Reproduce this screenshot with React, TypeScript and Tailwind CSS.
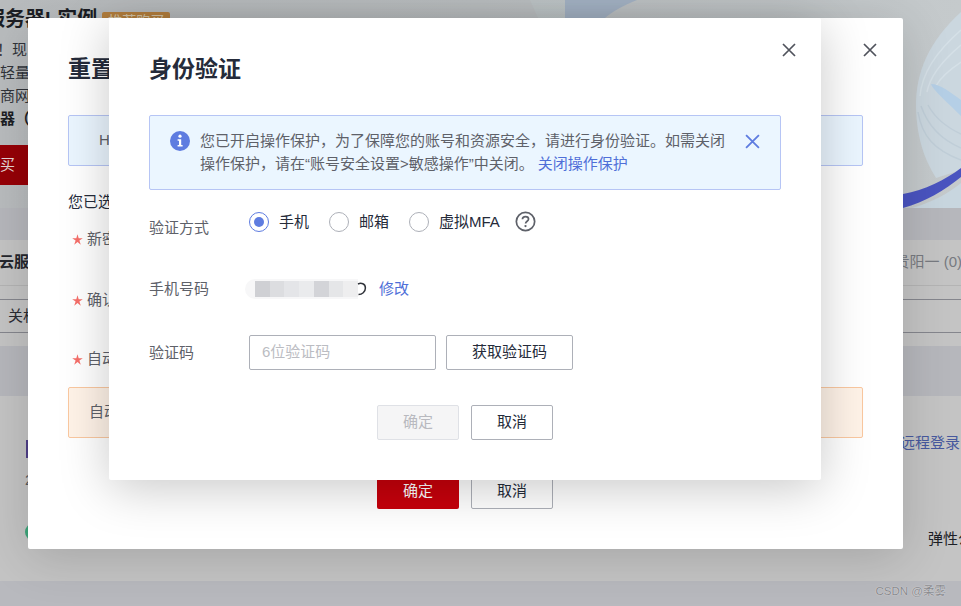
const FONT = "font-['Liberation_Sans','Noto_Sans_CJK_SC',sans-serif]";

function CloseIcon({ color = "#50535c", size = 14 }: { color?: string; size?: number }) {
  return (
    <svg width={size} height={size} viewBox="0 0 14 14" fill="none">
      <path d="M1 1L13 13M13 1L1 13" stroke={color} strokeWidth="1.7" />
    </svg>
  );
}

function Star() {
  return (
    <svg width="11" height="11" viewBox="0 0 11 11" className="shrink-0">
      <path d="M5.5 0.2L6.7 4.2H10.8L7.4 6.6L8.8 10.8L5.5 8.1L2.2 10.8L3.6 6.6L0.2 4.2H4.3Z" fill="#f66f6a" />
    </svg>
  );
}

function Radio({ checked, label }: { checked?: boolean; label: string }) {
  return (
    <div className="flex items-center gap-[10px]">
      <span
        className={
          checked
            ? "flex h-5 w-5 items-center justify-center rounded-full border border-[#5e7ce0] bg-white"
            : "flex h-5 w-5 items-center justify-center rounded-full border border-[#adb0b8] bg-white"
        }
      >
        {checked && <span className="h-[10px] w-[10px] rounded-full bg-[#5e7ce0]" />}
      </span>
      <span className="text-[15px] leading-5 text-[#252b3a]">{label}</span>
    </div>
  );
}

function Background() {
  return (
    <div className="flex h-[606px] w-[961px] flex-col bg-[#c4c4c4] text-[15px]">
      <div className="h-[208px] overflow-hidden bg-gradient-to-r from-[#b9bcbe] via-[#bcc0c2] to-[#c5cacc] pt-[6px]">
        <div className="ml-[-35px] flex items-center gap-[5px]">
          <span className="text-xl font-bold leading-[26px] text-[#1c1e24]">云服务器L实例</span>
          <span className="mt-[4px] rounded-[2px] bg-[#b8823f] px-[6px] text-sm leading-[18px] text-[#d8c8a8]">推荐购买</span>
        </div>
        <div className="ml-[-3px] mt-[6px] flex flex-col leading-[23px] text-[#30333a]">
          <span>！现</span>
          <span className="ml-[3px]">轻量</span>
          <span className="ml-[3px]">商网</span>
          <span className="ml-[3px] font-bold text-[#1c1e24]">器（</span>
        </div>
        <div className="mt-[15px] flex h-10 w-7 items-center bg-[#960007] text-[#e5d5d5]">买</div>
      </div>
      <div className="h-[32px] bg-[#b6b7bc]" />
      <div className="flex h-[46px] items-center justify-between border-b border-[#b4b4b4] bg-[#c4c4c4]">
        <span className="ml-[-1px] font-bold text-[#24262c]">云服务</span>
        <span className="mr-[-1px] text-[#777a80]">贵阳一 (0)</span>
      </div>
      <div className="mt-[13px] flex h-[34px] items-center border-y border-[#85868d] pl-[8px] text-[#2a2c33]">关机</div>
      <div className="h-[13px]" />
      <div className="h-[50px] bg-[#b6b7bc]" />
      <div className="flex h-[185px] justify-between bg-[#c4c4c4]">
        <div className="flex flex-col items-start pl-[26px] pt-[44px]">
          <span className="h-[18px] w-[2px] bg-[#4f3f88]" />
          <span className="ml-[-1px] mt-[11px] text-[#55575c]">2</span>
          <span className="ml-[-1px] mt-[31px] h-[18px] w-[18px] rounded-full bg-[#3da57a]" />
        </div>
        <div className="flex flex-col items-end pt-[36px]">
          <span className="mr-[1px] text-[#47599e]">远程登录</span>
          <span className="mr-[-27px] mt-[73px] text-[#1d1f26]">弹性公网</span>
        </div>
      </div>
      <div className="flex h-[25px] items-start justify-end bg-[#b8b9be] pr-[15px] pt-px text-[11.5px] leading-[18px] text-[#8a8b8f] [text-shadow:0_0_1px_#f5f5f5]">
        CSDN @柔雾
      </div>
    </div>
  );
}

function Art() {
  return (
    <svg className="absolute left-0 top-0" width="961" height="208" viewBox="0 0 961 208" fill="none">
      <path d="M530 0H565V18H538Z" fill="#c2cccd" opacity="0.5" />
      <path d="M565 0H637C622 6 612 12 605 18H565Z" fill="#a5b4c6" />
      <path d="M961 12C930 40 915 72 916 108C917 140 925 160 936 178L961 170Z" fill="#cbd7df" />
      <path d="M961 30C938 50 922 72 920 96M961 45C943 60 930 76 927 92M961 62C949 70 940 78 936 86" stroke="#d5e0e7" strokeWidth="1.5" />
      <path d="M918 112C922 136 934 150 961 160M921 106C928 126 942 140 961 148M928 105C936 120 948 128 961 134" stroke="#c0ced8" strokeWidth="1.5" />
      <path d="M931 84C933 90 945 100 961 116V100C950 92 940 84 931 84Z" fill="#b5cfe6" />
      <path d="M903 194C925 190 945 180 961 168V177C945 190 925 202 903 208Z" fill="#4a54c0" />
      <path d="M912 208C930 203 948 194 961 183V208Z" fill="#c8d6df" />
    </svg>
  );
}

function ResetDialog() {
  return (
    <div className="absolute left-[28px] top-[18px] h-[531px] w-[875px] rounded-[2px] bg-white pl-10 pr-10 pt-[35px] text-[15px] shadow-[0_8px_50px_rgba(0,0,0,0.16)]">
      <button className="absolute right-[26px] top-[25px]"><CloseIcon /></button>
      <div className="text-[23px] font-bold leading-[32px] text-[#252b3a]">重置密码</div>
      <div className="mt-[30px] flex h-[51px] items-center rounded-[2px] border border-[#b6c5f5] bg-[#ebf6ff] pl-[30px] text-[#5e6169]">HECS</div>
      <div className="mt-[26px] leading-5 text-[#252b3a]">您已选择</div>
      <div className="mt-[17px] flex items-center gap-[4px] pl-[4px] leading-5 text-[#5e6169]"><Star />新密码</div>
      <div className="mt-[41px] flex items-center gap-[4px] pl-[4px] leading-5 text-[#5e6169]"><Star />确认密码</div>
      <div className="mt-[39px] flex items-center gap-[4px] pl-[4px] leading-5 text-[#5e6169]"><Star />自动重启</div>
      <div className="mt-[18px] flex h-[51px] items-center rounded-[2px] border border-[#fac8a0] bg-[#fff3e8] pl-[20px] text-[#5e6169]">自动重启</div>
      <div className="mt-[35px] flex justify-center gap-3 pr-px">
        <button className="h-9 w-[82px] rounded-[2px] bg-[#c7000b] text-white">确定</button>
        <button className="h-9 w-[82px] rounded-[2px] border border-[#adb0b8] bg-white text-[#252b3a]">取消</button>
      </div>
    </div>
  );
}

function Mosaic() {
  const cells = ["#cfd0d4", "#dcdde0", "#e4e5e8", "#eaebed", "#d3d4d8", "#e5e6e8", "#eeeeef"];
  return (
    <div className="flex h-[20px] w-[113px] items-center rounded-l-full bg-[#f7f7f8] pl-[10px]">
      {cells.map((c, i) => (
        <span key={i} className="h-[16px] w-[15px]" style={{ backgroundColor: c }} />
      ))}
    </div>
  );
}

function AuthDialog() {
  return (
    <div className="absolute left-[109px] top-[18px] flex h-[462px] w-[712px] flex-col rounded-[2px] bg-white px-10 pt-[35px] text-[15px] shadow-[0_8px_50px_rgba(0,0,0,0.22)]">
      <button className="absolute right-[25px] top-[25px]"><CloseIcon /></button>
      <div className="text-[23px] font-bold leading-[32px] text-[#252b3a]">身份验证</div>

      <div className="relative mt-[30px] flex h-[75px] gap-[10px] rounded-[2px] border border-[#b6c5f5] bg-[#ebf6ff] pl-[20px] pr-[50px] pt-[13px]">
        <svg className="mt-[2px] shrink-0" width="20" height="20" viewBox="0 0 20 20">
          <circle cx="10" cy="10" r="10" fill="#5e7ce0" />
          <circle cx="10" cy="5.2" r="1.6" fill="#fff" />
          <path d="M7.6 8.2H11.2V14H12.6V15.6H7.6V14H9V9.8H7.6Z" fill="#fff" />
        </svg>
        <p className="leading-[23px] text-[#5e6169]">
          您已开启操作保护，为了保障您的账号和资源安全，请进行身份验证。如需关闭操作保护，请在“账号安全设置&gt;敏感操作”中关闭。
          <span className="ml-[4px] text-[#4f6fd8]">关闭操作保护</span>
        </p>
        <button className="absolute right-[20px] top-[18px]"><CloseIcon color="#5e7ce0" size={15} /></button>
      </div>

      <div className="mt-[21px] flex items-start">
        <span className="mt-[7px] w-[100px] leading-5 text-[#5e6169]">验证方式</span>
        <div className="flex items-center gap-[20px]">
          <Radio checked label="手机" />
          <Radio label="邮箱" />
          <div className="flex items-center gap-[15px]">
            <Radio label="虚拟MFA" />
            <svg width="21" height="21" viewBox="0 0 22 22" fill="none">
              <circle cx="11" cy="11" r="9.6" stroke="#5e6169" strokeWidth="1.8" />
              <path d="M7.8 8.6C7.8 6.8 9.2 5.8 11 5.8C12.8 5.8 14.2 6.9 14.2 8.5C14.2 10.6 11.1 10.8 11.1 13" stroke="#5e6169" strokeWidth="1.8" />
              <circle cx="11" cy="15.8" r="1.2" fill="#5e6169" />
            </svg>
          </div>
        </div>
      </div>

      <div className="mt-[41px] flex items-center">
        <span className="w-[96px] leading-5 text-[#5e6169]">手机号码</span>
        <Mosaic />
        <svg width="10" height="14" viewBox="0 0 10 14" fill="none" className="mb-[1px] ml-[-1px]">
          <path d="M1 2C4 0.6 8.4 1.4 8.4 6C8.4 10 5 12.4 1.5 12.4" stroke="#30333a" strokeWidth="1.5" />
        </svg>
        <span className="ml-[12px] leading-5 text-[#4f6fd8]">修改</span>
      </div>

      <div className="mt-[36px] flex items-center">
        <span className="w-[100px] leading-5 text-[#5e6169]">验证码</span>
        <div className="flex h-[35px] w-[187px] items-center rounded-[2px] border border-[#adb0b8] px-3 text-[#bbbcc2]">6位验证码</div>
        <button className="ml-[10px] h-[35px] w-[127px] rounded-[2px] border border-[#adb0b8] bg-white text-[#252b3a]">获取验证码</button>
      </div>

      <div className="mt-[35px] flex justify-center gap-3">
        <button className="h-[35px] w-[82px] rounded-[2px] border border-[#dfe1e6] bg-[#f5f5f6] text-[#b8b9bf]">确定</button>
        <button className="h-[35px] w-[82px] rounded-[2px] border border-[#adb0b8] bg-white text-[#252b3a]">取消</button>
      </div>
    </div>
  );
}

export default function App() {
  return (
    <div className={`relative h-[606px] w-[961px] overflow-hidden ${FONT}`}>
      <Background />
      <Art />
      <ResetDialog />
      <AuthDialog />
    </div>
  );
}
